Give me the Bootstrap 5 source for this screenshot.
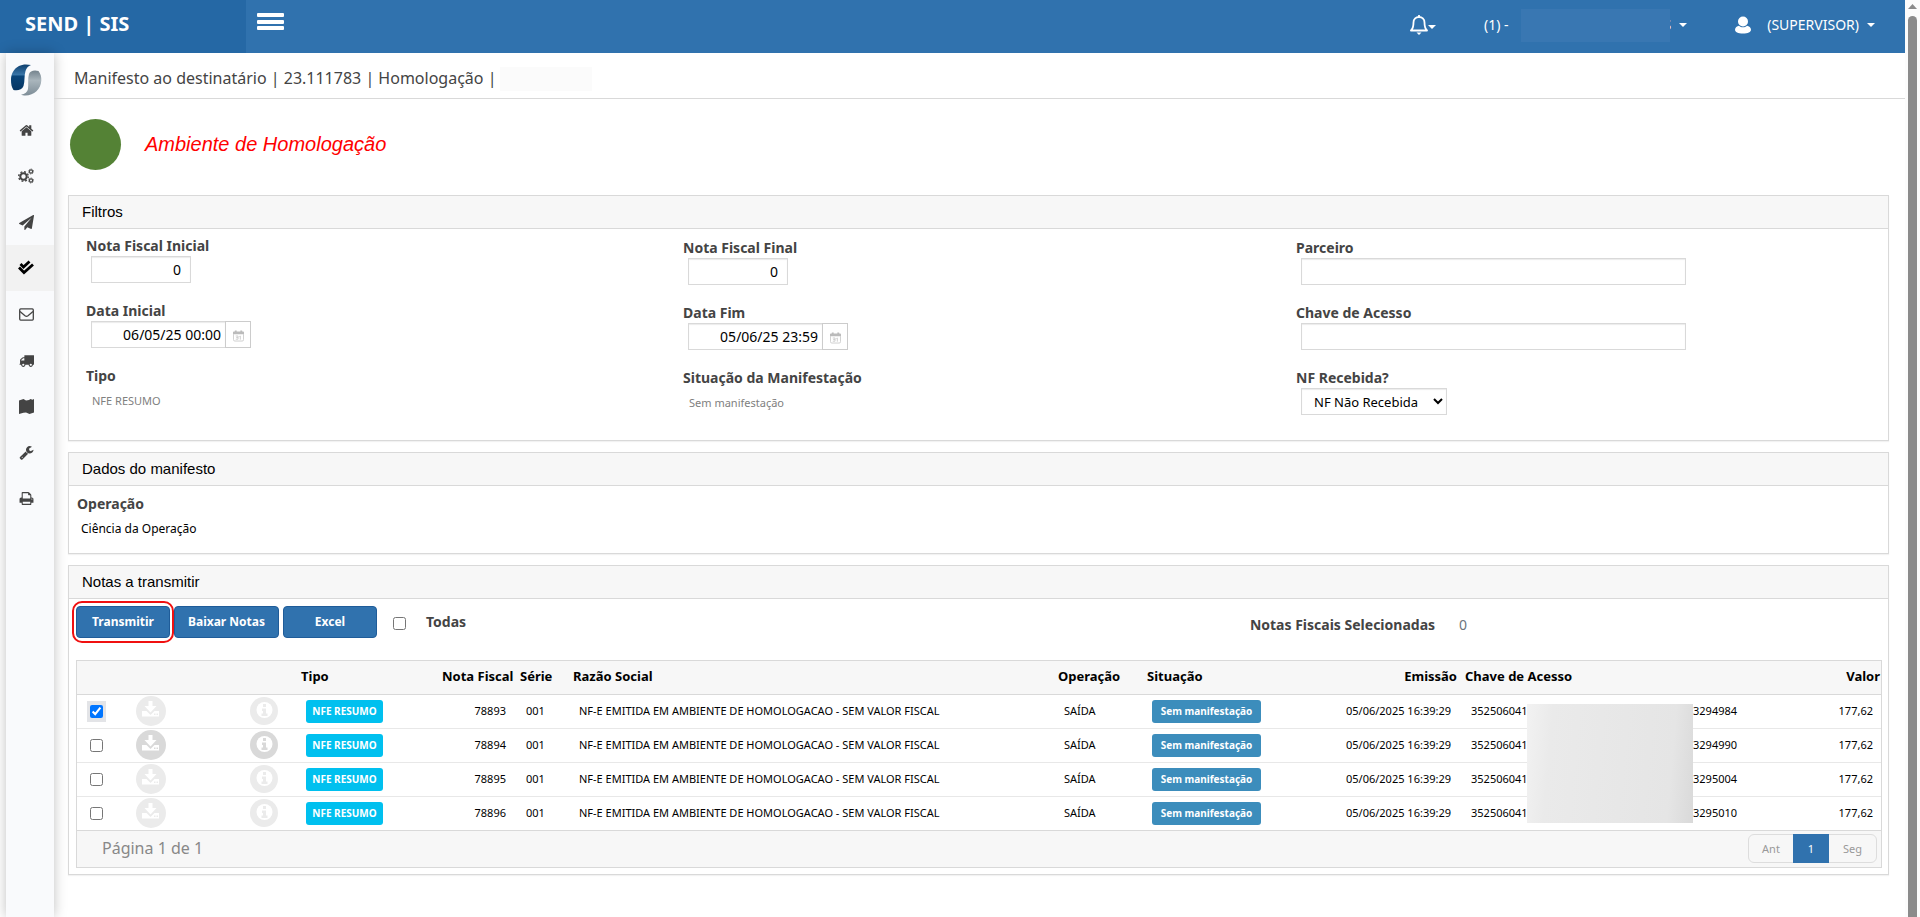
<!DOCTYPE html>
<html lang="pt-BR">
<head>
<meta charset="utf-8">
<meta name="viewport" content="width=device-width, initial-scale=1">
<title>SEND | SIS - Manifesto ao destinatário</title>
<link href="https://cdn.jsdelivr.net/npm/bootstrap@5.3.0/dist/css/bootstrap.min.css" rel="stylesheet">
<style>
  :root { --line: #d9d9d9; --blue: #3072ae; --blue-dark: #2568a5; }
  body { font-family: "Noto Sans", "Open Sans", sans-serif; font-size: 14px; line-height: 20px; color: #444; background: #fff; overflow: hidden; }
  .arial { font-family: "Liberation Sans", Arial, sans-serif; }

  /* top bar */
  .topbar { background: var(--blue); height: 53px; color: #fff; }
  .brand { background: var(--blue-dark); width: 246px; padding: 0 25px 5px; font-size: 20px; font-weight: 700; color: #fff; text-decoration: none; }
  .burger { padding: 0 0 9px 11px; border: 0; background: none; line-height: 0; }
  .topbar .menus { padding: 0 30px 3px 0; }
  .topbar .menu { color: #fff; text-decoration: none; }
  .caret { width: 0; height: 0; border: 4px solid transparent; border-top-color: #fff; border-bottom: 0; }
  .unit { margin-right: 12px; }
  .hidden-name { width: 149px; height: 33px; background: #3977b2; z-index: 1; position: relative; }
  .name-end { margin-left: -6px; }

  /* side bar */
  .sidebar { width: 48px; margin-left: 6px; background: #f9fafc; box-shadow: 0 0 12px rgba(0,0,0,.25); }
  .sidebar a { height: 46px; color: #444; }
  .sidebar a.side-logo { height: 54px; }
  .sidebar a.current { background: #f2f2f2; color: #000; }
  .shell { min-height: calc(100vh - 53px); }

  /* page */
  .page-title { height: 46px; padding: 6px 20px 0; border-bottom: 1px solid var(--line); font-size: 16px; font-weight: 400; margin: 0; }
  .hidden-title { width: 92px; height: 24px; background: #fbfbfb; margin-left: 4px; }
  .content { padding: 0 16px 0 14px; }
  .env { height: 96px; padding: 0 2px 6px; }
  .env-dot { width: 51px; height: 51px; background: #548235; }
  .env-text { font-size: 20px; font-style: italic; color: #f00; }
  .panel { border: 1px solid var(--line); border-radius: 0; margin-bottom: 11px; box-shadow: 0 1px 1px rgba(0,0,0,.05); }
  .panel > .card-header { height: 33px; padding: 0 13px; background: #f7f7f7; border-bottom: 1px solid var(--line); border-radius: 0; font-size: 15px; color: #000; }
  .filters { grid-template-columns: 597fr 613fr 592fr; padding: 7px 0 7px 17px; }
  .filters .lowered { padding-top: 2px; }
  .field { height: 65px; }
  .field label, .field .name, .strong { font-weight: 700; color: #444; display: block; }
  .box { display: block; height: 27px; margin-left: 5px; border: 1px solid var(--line); box-shadow: inset 0 1px 1px rgba(0,0,0,.08); border-radius: 0; background: #fff; color: #000; font-size: 14px; }
  .box.num { width: 100px; padding: 0 9px; text-align: right; }
  .box.date { width: 135px; padding: 0 4px; text-align: right; }
  .box.wide { width: 385px; }
  .box.pick { width: 146px; font-size: 13px; padding: 0 0 0 8px; }
  .cal { width: 26px; height: 27px; margin-left: -1px; border: 1px solid #ccc; background: #fff; padding: 2px 0 0; line-height: 0; }
  .readonly { font-size: 11px; color: #808080; padding: 5px 6px 0; }
  .op-body { padding: 8px 8px 14px; }
  .op-value { font-size: 12px; color: #000; padding: 5px 4px 0; }

  /* notes */
  .notes { padding: 7px 6px 6px 7px; }
  .tools { height: 54px; }
  .act { height: 32px; border: 1px solid #1f5c99; border-radius: 4px; background: var(--blue); color: #fff; font-size: 12px; font-weight: 700; padding: 0; }
  .act:hover { background: var(--blue-dark); color: #fff; }
  .act.target::after { content: ""; position: absolute; inset: -6px -5px; border: 2px solid #f01010; border-radius: 10px; }
  .w-a { width: 94px; } .w-b { width: 105px; }
  .all-tick { padding: 11px 0 0; }
  .all-name { padding: 6px 0 0 20px; }
  .picked { width: 35%; padding-top: 9px; }
  .grid-box { border: 1px solid var(--line); }
  .grid { table-layout: fixed; width: 100%; margin: 0; color: #000; }
  .grid th { height: 33px; padding: 0 4px 2px; background: #f7f7f7; border-bottom: 1px solid var(--line); font-size: 13px; font-weight: 700; white-space: nowrap; }
  .grid td { height: 34px; padding: 0 10px; border-bottom: 1px solid #e8e8e8; font-size: 11px; line-height: 16px; white-space: nowrap; }
  .grid tr:last-child td { border-bottom-color: var(--line); }
  .grid td:first-child { padding: 0 10px; line-height: 0; }
  .grid td.dl { padding-left: 21px; line-height: 0; }
  .grid td.inf { text-align: center; line-height: 0; }
  .grid th:last-child { padding-right: 1px; } .grid td:last-child { padding-right: 8px; }
  .tick { width: 13px; height: 13px; margin: 0; display: block; }
  .tick-wrap { display: inline-block; padding: 3px; }
  .tick-wrap.on { background: #e3e4e7; padding: 4px 3px; }
  .tag { display: inline-block; height: 23px; line-height: 22px; border-radius: 3px; color: #fff; font-size: 10px; font-weight: 700; text-align: center; background: #00c0ef; width: 77px; }
  .grid td.tagged { padding-left: 9px; }
  .tag.sit { background: #3c8dbc; width: 109px; }
  .orb { border: 0; padding: 0; background: none; color: #ebebeb; line-height: 0; }
  .orb.dark { color: #d9d9d9; }
  .key-start { width: 56px; } .key-gap { width: 166px; }
  .key-mask { position: absolute; left: 66px; top: 9px; width: 166px; height: 119px; background: linear-gradient(95deg, #f2f2f2 0, #eaeaea 15%, #e5e5e5 85%, #d9d9d9 100%); }
  .grid-foot { height: 36px; background: #f7f7f7; padding: 0 4px 1px 25px; font-size: 16px; color: #888; }
  .pager .page-link { height: 29px; padding: 0; line-height: 27px; font-size: 11px; text-align: center; background: #f7f7f7; border-color: #ddd; color: #999; }
  .pager .active .page-link { background: var(--blue); border-color: var(--blue); color: #fff; }
  .pager .p1 { width: 46px; } .pager .p2 { width: 36px; } .pager .p3 { width: 49px; }

  /* scroll bar */
  .sbar { width: 15px; background: #fcfcfc; padding: 4px 3px 0; }
  .sbar .up { width: 9px; height: 5px; background: #8b8b8b; clip-path: polygon(50% 0, 100% 100%, 0 100%); }
  .sbar .thumb { width: 9px; background: #8b8b8b; border-radius: 5px 5px 0 0; margin-top: 7px; }
</style>
</head>
<body class="d-flex vh-100">
<svg class="d-none" xmlns="http://www.w3.org/2000/svg">
  <symbol id="dl" viewBox="0 0 30 30"><circle cx="15" cy="15" r="15" fill="currentColor"/><path fill="#fff" d="M12.500 5h4v5h4l-6 6.500-6-6.500h4zM6 15h4.500l4 4 4-4H23v5.500H6z"/><path fill="currentColor" d="M18 17.500h1.500V19H18zM20.500 17.500H22V19h-1.500z"/></symbol>
  <symbol id="inf" viewBox="0 0 28 30"><circle cx="14" cy="15" r="14" fill="currentColor"/><circle cx="14.500" cy="14" r="8" fill="#fff"/><path fill="currentColor" d="M13 8h3v3h-3zM12 12.500h4v5h1.500v2.500h-6v-2.500H13V15h-1z"/></symbol>
  <symbol id="cal" viewBox="0 0 12 12"><path fill="#bbb" d="M2 0h2v1h4V0h2v1h1a1 1 0 0 1 1 1v2H0V2a1 1 0 0 1 1-1h1z"/><path fill="none" stroke="#ccc" d="M.5 4v6a1.500 1.500 0 0 0 1.500 1.500h8a1.500 1.500 0 0 0 1.500-1.500V4"/><path fill="none" stroke="#ccc" d="M3 6h2.500v3.500H3M3.500 7.700h2M7 6.500l1-.5v4"/></symbol>
</svg>

<div class="flex-grow-1 overflow-hidden">
  <header class="topbar d-flex">
    <a class="brand d-flex align-items-center" href="#">SEND | SIS</a>
    <button class="burger" type="button" aria-label="Menu"><svg width="27" height="18" fill="#fff"><rect width="27" height="4" rx="1"/><rect y="7" width="27" height="4" rx="1"/><rect y="13" width="27" height="4" rx="1"/></svg></button>
    <div class="menus d-flex align-items-center ms-auto">
      <a class="menu d-flex align-items-center" href="#" aria-label="Avisos">
        <svg width="18" height="22" viewBox="0 0 18 22" fill="none" stroke="#fff" stroke-width="1.800"><path d="M1 16.500h16c-2-2-2.500-4-2.500-8C14.500 5 12 3 9 3S3.500 5 3.500 8.500c0 4-.5 6-2.500 8z" stroke-linejoin="round"/><path d="M9 3V1"/><path d="M6.500 18.500h5L9 21z" fill="#fff" stroke="none"/></svg>
        <span class="caret mt-1"></span>
      </a>
      <a class="menu d-flex align-items-center ms-5" href="#"><span class="unit">(1) -</span><span class="hidden-name"></span><span class="name-end">S</span><span class="caret ms-2"></span></a>
      <a class="menu d-flex align-items-center ms-5" href="#">
        <svg width="16" height="18" viewBox="0 0 16 18" fill="#fff"><circle cx="8" cy="5.500" r="5"/><path d="M8 17.500c-5 0-8-1.500-8-3.800C0 11.500 2 10.200 4 9.800c2.400 2 5.600 2 8 0 2 .4 4 1.700 4 3.900 0 2.300-3 3.800-8 3.800z"/></svg>
        <span class="ms-3">(SUPERVISOR)</span><span class="caret ms-2"></span>
      </a>
    </div>
  </header>

  <div class="shell d-flex">
    <nav class="sidebar flex-shrink-0" aria-label="Principal">
      <a class="side-logo d-flex align-items-center justify-content-center pe-3" href="#" aria-label="Início">
        <svg class="ms-2 flex-shrink-0" width="32" height="32" viewBox="0 0 32 32"><defs><linearGradient id="lb" x2="0" y2="1"><stop stop-color="#0d3f6e"/><stop offset=".4" stop-color="#3a76a8"/><stop offset=".45" stop-color="#0a4579"/><stop offset="1" stop-color="#063663"/></linearGradient><linearGradient id="lg" x2="0" y2="1"><stop stop-color="#74838d"/><stop offset=".4" stop-color="#a9b5bc"/><stop offset="1" stop-color="#7e8d97"/></linearGradient></defs><path fill="url(#lb)" d="M21 1C17 0 12 .2 9 2 3.500 5 1 10 1 16c0 4 .6 7 2.500 10 4 1 8.500 0 10-4 1.500-5 .5-10 2-15C16.500 4 18 2 21 1z"/><path fill="url(#lg)" d="M28.500 7c2.200 3 3 6 2.800 9.500C31 25 24 31.500 15.500 31.500c-2 0-3.500-.3-4.500-.8 4-.7 6.500-2.700 7-5.700.7-5-.5-10 1-15C20 7 24 5.500 28.500 7z"/></svg>
      </a>
      <a class="d-flex align-items-center justify-content-center pe-3" href="#" aria-label="Home"><svg class="ms-2" width="15" height="15" viewBox="0 0 1792 1792" fill="currentColor"><path d="M1472 992v480q0 26-19 45t-45 19h-384v-384h-256v384h-384q-26 0-45-19t-19-45v-480q0-1 .5-3t.5-3l575-474 575 474q1 2 1 6zm223-69l-62 74q-8 9-21 11h-3q-13 0-21-7l-692-577-692 577q-12 8-24 7-13-2-21-11l-62-74q-8-10-7-23.500t11-21.500l719-599q32-26 76-26t76 26l244 204v-195q0-14 9-23t23-9h192q14 0 23 9t9 23v408l219 182q10 8 11 21.500t-7 23.500z"/></svg></a>
      <a class="d-flex align-items-center justify-content-center pe-3" href="#" aria-label="Configurações"><svg class="ms-2" width="16" height="16" viewBox="0 0 16 16" fill="none" stroke="currentColor"><circle cx="5.500" cy="8.500" r="3.200" stroke-width="2"/><circle cx="5.500" cy="8.500" r="4.800" stroke-width="1.400" stroke-dasharray="1.900 1.870"/><circle cx="13" cy="3.500" r="1.600" stroke-width="1.200"/><circle cx="13" cy="3.500" r="2.500" stroke-width=".8" stroke-dasharray="1 .96"/><circle cx="13" cy="12.500" r="1.600" stroke-width="1.200"/><circle cx="13" cy="12.500" r="2.500" stroke-width=".8" stroke-dasharray="1 .96"/></svg></a>
      <a class="d-flex align-items-center justify-content-center pe-3" href="#" aria-label="Enviar"><svg class="ms-2" width="15" height="15" viewBox="0 0 1792 1792" fill="currentColor"><path d="M1764 11q33 24 27 64l-256 1536q-5 29-32 45-14 8-31 8-11 0-24-5l-453-185-242 295q-18 23-49 23-13 0-22-4-19-7-30.500-23.500t-11.500-36.500v-349l864-1059-1069 925-395-162q-37-14-40-55-2-40 32-59l1664-960q15-9 32-9 20 0 36 11z"/></svg></a>
      <a class="current d-flex align-items-center justify-content-center pe-3" href="#" aria-label="Manifesto"><svg class="ms-2" width="16" height="16" viewBox="0 0 16 16" fill="none" stroke="currentColor" stroke-width="2.800"><path d="M2.500 4l3 3L11.500 1.500M1 7.500l5 5L15 4.500"/></svg></a>
      <a class="d-flex align-items-center justify-content-center pe-3" href="#" aria-label="Mensagens"><svg class="ms-2" width="15" height="13" viewBox="0 0 15 13" fill="none" stroke="currentColor" stroke-width="1.300"><rect x=".7" y=".9" width="13.600" height="11.200" rx="1"/><path d="M1 3.500l5 4.200c1 .8 2 .8 3 0l5-4.200"/></svg></a>
      <a class="d-flex align-items-center justify-content-center pe-3" href="#" aria-label="Transporte"><svg class="ms-2" width="15" height="15" viewBox="0 0 1792 1792" fill="currentColor"><path d="M640 1408q0-52-38-90t-90-38-90 38-38 90 38 90 90 38 90-38 38-90zm-384-512h384v-256h-158q-13 0-22 9l-195 195q-9 9-9 22v30zm1280 512q0-52-38-90t-90-38-90 38-38 90 38 90 90 38 90-38 38-90zm256-1088v1024q0 15-4 26.500t-13.500 18.500-16.500 11.500-23.500 6-22.500 2-25.500 0-22.500-.5q0 106-75 181t-181 75-181-75-75-181h-384q0 106-75 181t-181 75-181-75-75-181h-64q-3 0-22.500.5t-25.500 0-22.500-2-23.500-6-16.500-11.500-13.500-18.500-4-26.500q0-26 19-45t45-19v-320q0-8-.5-35t0-38 2.500-34.500 6.500-37 14-30.500 22.500-30l198-198q19-19 50.500-32t58.500-13h160v-192q0-26 19-45t45-19h1024q26 0 45 19t19 45z"/></svg></a>
      <a class="d-flex align-items-center justify-content-center pe-3" href="#" aria-label="Mapa"><svg class="ms-2" width="15" height="15" viewBox="0 0 15 15" fill="currentColor"><path d="M0 1.500L4.500 0l2.500 1.500 3-.5 1.500-1 2 .8L15 0v13.500L10.500 15 7 13.500l-2.500.3L0 15z"/></svg></a>
      <a class="d-flex align-items-center justify-content-center pe-3" href="#" aria-label="Ferramentas"><svg class="ms-2" width="15" height="15" viewBox="0 0 1792 1792" fill="currentColor"><path d="M448 1472q0-26-19-45t-45-19-45 19-19 45 19 45 45 19 45-19 19-45zm644-420l-682 682q-37 37-90 37-52 0-91-37l-106-108q-38-36-38-90 0-53 38-91l681-681q39 98 114.500 173.500t173.500 114.500zm634-435q0 39-23 106-47 134-164.500 217.500t-258.500 83.500q-185 0-316.500-131.500t-131.500-316.500 131.500-316.500 316.500-131.500q58 0 121.500 16.500t107.500 46.500q16 11 16 28t-16 28l-293 169v224l193 107q5-3 79-48.500t135.500-81 70.500-35.500q15 0 23.500 10t8.500 25z"/></svg></a>
      <a class="d-flex align-items-center justify-content-center pe-3" href="#" aria-label="Imprimir"><svg class="ms-2" width="15" height="15" viewBox="0 0 1792 1792" fill="currentColor"><path d="M448 1536h896v-256h-896v256zm0-640h896v-384h-160q-40 0-68-28t-28-68v-160h-640v640zm1152 64q0-26-19-45t-45-19-45 19-19 45 19 45 45 19 45-19 19-45zm128 0v416q0 13-9.500 22.500t-22.500 9.500h-224v160q0 40-28 68t-68 28h-960q-40 0-68-28t-28-68v-160h-224q-13 0-22.500-9.500t-9.500-22.500v-416q0-79 56.500-135.500t135.500-56.500h64v-544q0-40 28-68t68-28h672q40 0 88 20t76 48l152 152q28 28 48 76t20 88v256h64q79 0 135.500 56.500t56.500 135.500z"/></svg></a>
    </nav>

    <main class="flex-grow-1 overflow-hidden">
      <h1 class="page-title d-flex align-items-center"><span>Manifesto ao destinatário | 23.111783 | Homologação |</span><span class="hidden-title"></span></h1>
      <div class="content">
        <div class="env d-flex align-items-center gap-4 arial"><span class="env-dot rounded-circle"></span><span class="env-text">Ambiente de Homologação</span></div>

        <section class="card panel">
          <div class="card-header arial d-flex align-items-center">Filtros</div>
          <form class="filters d-grid">
            <div>
              <div class="field"><label for="nfi">Nota Fiscal Inicial</label><input class="box num" id="nfi" type="text" value="0"></div>
              <div class="field"><label for="dti">Data Inicial</label><div class="d-flex"><input class="box date" id="dti" type="text" value="06/05/25 00:00"><button class="cal" type="button" aria-label="Calendário"><svg width="11" height="12"><use href="#cal"/></svg></button></div></div>
              <div class="field"><span class="name">Tipo</span><div class="readonly">NFE RESUMO</div></div>
            </div>
            <div class="lowered">
              <div class="field"><label for="nff">Nota Fiscal Final</label><input class="box num" id="nff" type="text" value="0"></div>
              <div class="field"><label for="dtf">Data Fim</label><div class="d-flex"><input class="box date" id="dtf" type="text" value="05/06/25 23:59"><button class="cal" type="button" aria-label="Calendário"><svg width="11" height="12"><use href="#cal"/></svg></button></div></div>
              <div class="field"><span class="name">Situação da Manifestação</span><div class="readonly">Sem manifestação</div></div>
            </div>
            <div class="lowered">
              <div class="field"><label for="par">Parceiro</label><input class="box wide" id="par" type="text"></div>
              <div class="field"><label for="chv">Chave de Acesso</label><input class="box wide" id="chv" type="text"></div>
              <div class="field"><label for="rec">NF Recebida?</label><select class="box pick" id="rec"><option>NF Não Recebida</option><option>NF Recebida</option></select></div>
            </div>
          </form>
        </section>

        <section class="card panel">
          <div class="card-header arial d-flex align-items-center">Dados do manifesto</div>
          <div class="op-body"><span class="strong">Operação</span><div class="op-value">Ciência da Operação</div></div>
        </section>

        <section class="card panel">
          <div class="card-header arial d-flex align-items-center">Notas a transmitir</div>
          <div class="notes">
            <div class="tools d-flex">
              <div class="flex-grow-1 d-flex align-items-start">
                <button class="btn act target w-a position-relative" type="button">Transmitir</button>
                <button class="btn act w-b ms-1" type="button">Baixar Notas</button>
                <button class="btn act w-a ms-1 me-3" type="button">Excel</button>
                <div class="all-tick"><input class="tick" id="all" type="checkbox"></div>
                <label class="strong all-name" for="all">Todas</label>
              </div>
              <div class="picked d-flex gap-4"><span class="strong">Notas Fiscais Selecionadas</span><span class="text-secondary">0</span></div>
            </div>
            <div class="grid-box">
              <table class="grid">
                <colgroup><col style="width:38px"><col style="width:116px"><col style="width:66px"><col style="width:141px"><col style="width:78px"><col style="width:53px"><col><col style="width:89px"><col style="width:156px"><col style="width:162px"><col style="width:318px"><col style="width:102px"></colgroup>
                <thead><tr><th></th><th></th><th></th><th>Tipo</th><th class="text-end">Nota Fiscal</th><th>Série</th><th>Razão Social</th><th>Operação</th><th>Situação</th><th class="text-end">Emissão</th><th>Chave de Acesso</th><th class="text-end">Valor</th></tr></thead>
                <tbody>
                  <tr><td><span class="tick-wrap on"><input class="tick" type="checkbox" checked aria-label="78893"></span></td><td class="dl"><button class="orb" type="button" aria-label="Baixar"><svg width="30" height="30"><use href="#dl"/></svg></button></td><td class="inf"><button class="orb" type="button" aria-label="Detalhes"><svg width="28" height="30"><use href="#inf"/></svg></button></td><td class="tagged"><span class="tag">NFE RESUMO</span></td><td class="text-end">78893</td><td>001</td><td>NF-E EMITIDA EM AMBIENTE DE HOMOLOGACAO - SEM VALOR FISCAL</td><td>SAÍDA</td><td class="tagged"><span class="tag sit">Sem manifestação</span></td><td class="text-end">05/06/2025 16:39:29</td><td class="position-relative"><div class="d-flex"><span class="key-start">352506041</span><span class="key-gap"></span><span>3294984</span></div><div class="key-mask"></div></td><td class="text-end">177,62</td></tr>
                  <tr><td><span class="tick-wrap"><input class="tick" type="checkbox" aria-label="78894"></span></td><td class="dl"><button class="orb dark" type="button" aria-label="Baixar"><svg width="30" height="30"><use href="#dl"/></svg></button></td><td class="inf"><button class="orb dark" type="button" aria-label="Detalhes"><svg width="28" height="30"><use href="#inf"/></svg></button></td><td class="tagged"><span class="tag">NFE RESUMO</span></td><td class="text-end">78894</td><td>001</td><td>NF-E EMITIDA EM AMBIENTE DE HOMOLOGACAO - SEM VALOR FISCAL</td><td>SAÍDA</td><td class="tagged"><span class="tag sit">Sem manifestação</span></td><td class="text-end">05/06/2025 16:39:29</td><td><div class="d-flex"><span class="key-start">352506041</span><span class="key-gap"></span><span>3294990</span></div></td><td class="text-end">177,62</td></tr>
                  <tr><td><span class="tick-wrap"><input class="tick" type="checkbox" aria-label="78895"></span></td><td class="dl"><button class="orb" type="button" aria-label="Baixar"><svg width="30" height="30"><use href="#dl"/></svg></button></td><td class="inf"><button class="orb" type="button" aria-label="Detalhes"><svg width="28" height="30"><use href="#inf"/></svg></button></td><td class="tagged"><span class="tag">NFE RESUMO</span></td><td class="text-end">78895</td><td>001</td><td>NF-E EMITIDA EM AMBIENTE DE HOMOLOGACAO - SEM VALOR FISCAL</td><td>SAÍDA</td><td class="tagged"><span class="tag sit">Sem manifestação</span></td><td class="text-end">05/06/2025 16:39:29</td><td><div class="d-flex"><span class="key-start">352506041</span><span class="key-gap"></span><span>3295004</span></div></td><td class="text-end">177,62</td></tr>
                  <tr><td><span class="tick-wrap"><input class="tick" type="checkbox" aria-label="78896"></span></td><td class="dl"><button class="orb" type="button" aria-label="Baixar"><svg width="30" height="30"><use href="#dl"/></svg></button></td><td class="inf"><button class="orb" type="button" aria-label="Detalhes"><svg width="28" height="30"><use href="#inf"/></svg></button></td><td class="tagged"><span class="tag">NFE RESUMO</span></td><td class="text-end">78896</td><td>001</td><td>NF-E EMITIDA EM AMBIENTE DE HOMOLOGACAO - SEM VALOR FISCAL</td><td>SAÍDA</td><td class="tagged"><span class="tag sit">Sem manifestação</span></td><td class="text-end">05/06/2025 16:39:29</td><td><div class="d-flex"><span class="key-start">352506041</span><span class="key-gap"></span><span>3295010</span></div></td><td class="text-end">177,62</td></tr>
                </tbody>
              </table>
              <div class="grid-foot d-flex align-items-center justify-content-between">
                <span>Página 1 de 1</span>
                <ul class="pagination pager mb-0">
                  <li class="page-item"><a class="page-link p1" href="#">Ant</a></li>
                  <li class="page-item active"><a class="page-link p2" href="#">1</a></li>
                  <li class="page-item"><a class="page-link p3" href="#">Seg</a></li>
                </ul>
              </div>
            </div>
          </div>
        </section>
      </div>
    </main>
  </div>
</div>

<div class="sbar d-flex flex-column flex-shrink-0" aria-hidden="true"><div class="up"></div><div class="thumb flex-grow-1"></div></div>
<script src="https://cdn.jsdelivr.net/npm/bootstrap@5.3.0/dist/js/bootstrap.bundle.min.js"></script>
</body>
</html>
